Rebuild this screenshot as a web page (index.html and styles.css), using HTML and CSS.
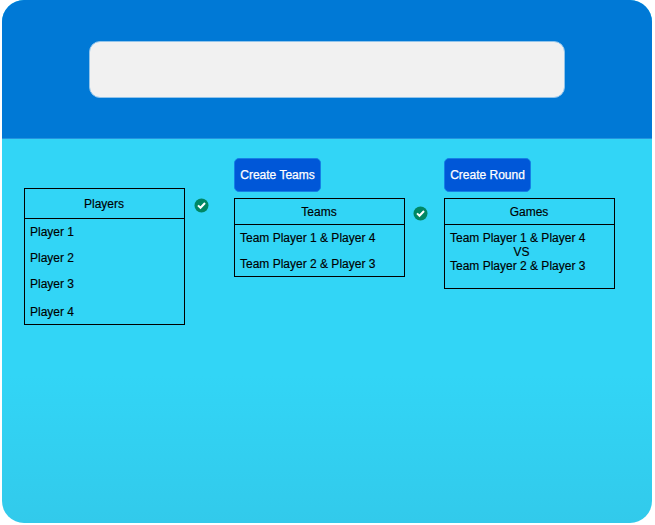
FILE: index.html
```html
<!DOCTYPE html>
<html lang="en">
<head>
<meta charset="utf-8">
<title>Players, Teams and Games</title>
<link rel="stylesheet" href="styles.css">
</head>
<body>
<main class="device">
  <header class="header"><div class="banner"></div></header>
  <section class="content">
    <div class="column players">
      <div class="list">
        <h2 class="list-title">Players</h2>
        <ul class="rows">
          <li>Player 1</li>
          <li>Player 2</li>
          <li>Player 3</li>
          <li class="last">Player 4</li>
        </ul>
      </div>
    </div>
    <svg class="check check-players" viewBox="0 0 15 15"><circle cx="7.5" cy="7.5" r="7"/><path d="M4 7.4 6.5 9.8 11 5"/></svg>
    <div class="column">
      <button class="button">Create Teams</button>
      <div class="list">
        <h2 class="list-title">Teams</h2>
        <ul class="rows">
          <li>Team Player 1 &amp; Player 4</li>
          <li>Team Player 2 &amp; Player 3</li>
        </ul>
      </div>
    </div>
    <svg class="check check-teams" viewBox="0 0 15 15"><circle cx="7.5" cy="7.5" r="7"/><path d="M4 7.4 6.5 9.8 11 5"/></svg>
    <div class="column">
      <button class="button">Create Round</button>
      <div class="list">
        <h2 class="list-title">Games</h2>
        <div class="match">
          <div>Team Player 1 &amp; Player 4</div>
          <div class="versus">VS</div>
          <div>Team Player 2 &amp; Player 3</div>
        </div>
      </div>
    </div>
  </section>
</main>
</body>
</html>
```
FILE: styles.css
```css
* {
  box-sizing: border-box;
}

body {
  margin: 0;
  background: #fff;
  color: #000;
  font: 12px/14px "Liberation Sans", Arial, sans-serif;
  -webkit-text-stroke: 0.15px currentColor;
  overflow: hidden;
}

.device {
  display: flex;
  flex-direction: column;
  width: 650px;
  height: 523px;
  margin-left: 2px;
  border-radius: 22px;
  overflow: hidden;
  background: linear-gradient(#32d5f6 0, #32d5f6 375px, #32caeb 100%);
}

.header {
  height: 139px;
  padding: 41px 87px 0;
  background: #0079d6;
  border-bottom: 1px solid #2694df;
}

.banner {
  height: 57px;
  border: 1px solid #91c4eb;
  border-radius: 11px;
  background: #f1f1f1;
}

.content {
  display: flex;
  align-items: flex-start;
  padding: 19px 0 0 22px;
}

.column {
  flex: none;
  width: 171px;
}

.players {
  width: 161px;
  padding-top: 30px;
}

.list {
  border: 1px solid #000;
}

.list-title {
  margin: 0;
  height: 26px;
  padding-right: 1px;
  border-bottom: 1px solid #000;
  font-size: 12px;
  font-weight: 400;
  line-height: 26px;
  text-align: center;
}

.players .list-title {
  height: 30px;
  line-height: 30px;
}

.rows {
  list-style: none;
  margin: 0;
  padding: 0 5px;
}

.rows li {
  height: 26px;
  line-height: 26px;
}

.rows li:last-child {
  height: 25px;
}

.rows .last:last-child {
  height: 27px;
  line-height: 30px;
}

.button {
  display: block;
  width: 87px;
  height: 34px;
  margin-bottom: 6px;
  padding: 0;
  border: 1px solid #1580e6;
  border-radius: 5px;
  background: #0057d8;
  color: #fff;
  font: inherit;
  -webkit-text-stroke: 0.25px #fff;
  white-space: nowrap;
}

.match {
  height: 63px;
  padding: 6px 5px;
}

.versus {
  padding-left: 63.5px;
}

.check {
  flex: none;
  width: 15px;
  height: 15px;
}

.check circle {
  fill: #008764;
}

.check path {
  fill: none;
  stroke: #fff;
  stroke-width: 2;
}

.check-players {
  margin: 40px 25px 0 9px;
}

.check-teams {
  margin: 48px 16px 0 8px;
}
```
